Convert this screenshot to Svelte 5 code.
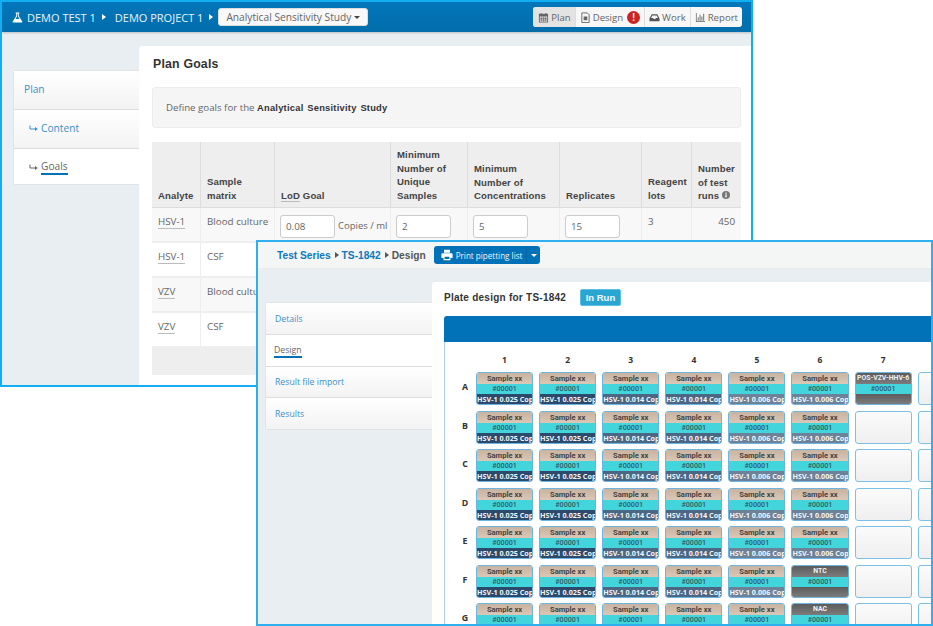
<script>
  const rows1 = [
    ['HSV-1', 'Blood culture', true],
    ['HSV-1', 'CSF', false],
    ['VZV', 'Blood culture', true],
    ['VZV', 'CSF', false]
  ];
  const sideTabs = ['Details', 'Design', 'Result file import', 'Results'];
  const colLabels = [1, 2, 3, 4, 5, 6, 7, 8];
  const rowLabels = ['A', 'B', 'C', 'D', 'E', 'F', 'G'];
  const conc = ['HSV-1 0.025 Cop', 'HSV-1 0.025 Cop', 'HSV-1 0.014 Cop', 'HSV-1 0.014 Cop', 'HSV-1 0.006 Cop', 'HSV-1 0.006 Cop'];
  const tone = ['d1', 'd1', 'd2', 'd2', 'd3', 'd3'];

  function well(r, c) {
    if (c === 7) return { kind: 'empty' };
    if (c === 6) return r === 0 ? { kind: 'ctl', top: 'POS-VZV-HHV-6' } : { kind: 'empty' };
    if (c === 5 && r === 5) return { kind: 'ctl', top: 'NTC' };
    if (c === 5 && r === 6) return { kind: 'ctl', top: 'NAC' };
    return { kind: 'sample', bottom: conc[c], tone: tone[c] };
  }
</script>

{#snippet ret()}
  <svg class="ret" viewBox="0 0 9 7" width="9" height="7"><path fill="none" stroke="currentColor" stroke-width="1" d="M1 .5v3.500h6.500"/><path fill="currentColor" d="M6 2l2.800 2L6 6z"/></svg>
{/snippet}

<div class="canvas">
  <section class="win win1">
    <header class="topbar">
      <div class="crumbs">
        <svg class="flask" viewBox="0 0 12 12" width="11" height="11"><path fill="#fff" d="M4 .5h4v1h-.6v2.800l3.700 5.800c.5.800 0 1.400-.8 1.400H1.700c-.8 0-1.300-.6-.8-1.400l3.700-5.800V1.500H4zM3.700 7.500h4.600L6.400 4.600V1.500H5.600v3.100z"/></svg>
        <span>DEMO TEST 1</span><i class="caret-r white"></i>
        <span class="second">DEMO PROJECT 1</span><i class="caret-r white"></i>
        <button class="study">Analytical Sensitivity Study<i class="caret-d"></i></button>
      </div>
      <div class="tabs">
        <div class="tab on">
          <svg viewBox="0 0 12 12" width="11" height="11"><path fill="#666" d="M1 2h2V1h1v1h4V1h1v1h2v9.500H1zm1 3v5.500h8V5z"/><path stroke="#666" stroke-width=".7" d="M4 5v5.500M6 5v5.500M8 5v5.500M2 7h8M2 8.800h8"/></svg>Plan</div>
        <div class="tab">
          <svg viewBox="0 0 12 12" width="11" height="11"><path fill="none" stroke="#666" d="M2 1h6l2 2v8.500H2z"/><path fill="#666" d="M4 5h4v4H4z"/></svg>Design<span class="alert">!</span></div>
        <div class="tab">
          <svg viewBox="0 0 12 12" width="11" height="11"><path fill="#555" d="M3 2.500h6l2.500 4.500v3H.5V7zM3.700 3.700 2.200 6.500h2.300l.6 1h1.800l.6-1h2.300L8.300 3.700z"/></svg>Work</div>
        <div class="tab">
          <svg viewBox="0 0 12 12" width="11" height="11"><path fill="#666" d="M1 1h.8v9.200H11v.8H1zM3 6h1v3.500H3zM5 3h1v6.500H5zM7 5h1v4.500H7zM9 2h1v7.500H9z"/></svg>Report</div>
      </div>
    </header>
    <div class="body1">
      <nav class="side1">
        <a class="s1 link">Plan</a>
        <a class="s1 link sub">{@render ret()}Content</a>
        <a class="s1 active sub">{@render ret()}<span class="uline">Goals</span></a>
      </nav>
      <main class="panel1">
        <h2>Plan Goals</h2>
        <div class="well-note">Define goals for the <b>Analytical Sensitivity Study</b></div>
        <div class="tbl">
          <div class="th">Analyte</div>
          <div class="th">Sample<br />matrix</div>
          <div class="th"><span class="dash-h">LoD</span> Goal</div>
          <div class="th">Minimum<br />Number of<br />Unique<br />Samples</div>
          <div class="th">Minimum<br />Number of<br />Concentrations</div>
          <div class="th">Replicates</div>
          <div class="th">Reagent<br />lots</div>
          <div class="th">Number<br />of test<br />runs <svg viewBox="0 0 10 10" width="8" height="8"><circle cx="5" cy="5" r="5" fill="#777"/><rect x="4.200" y="4.200" width="1.600" height="3.800" fill="#fff"/><rect x="4.200" y="2" width="1.600" height="1.500" fill="#fff"/></svg></div>
          {#each rows1 as r, i}
            <div class="td" class:alt={r[2]}><span class="dash">{r[0]}</span></div>
            <div class="td" class:alt={r[2]}>{r[1]}</div>
            <div class="td ctl" class:alt={r[2]}>{#if i === 0}<span class="inp">0.08</span><span class="unit">Copies / ml</span>{/if}</div>
            <div class="td ctl" class:alt={r[2]}>{#if i === 0}<span class="inp">2</span>{/if}</div>
            <div class="td ctl" class:alt={r[2]}>{#if i === 0}<span class="inp">5</span>{/if}</div>
            <div class="td ctl" class:alt={r[2]}>{#if i === 0}<span class="inp">15</span>{/if}</div>
            <div class="td" class:alt={r[2]}>{i === 0 ? '3' : ''}</div>
            <div class="td num" class:alt={r[2]}>{i === 0 ? '450' : ''}</div>
          {/each}
          <div class="tfoot"></div>
        </div>
      </main>
    </div>
  </section>

  <section class="win win2">
    <header class="bar2">
      <a class="bc">Test Series</a><i class="caret-r dark"></i><a class="bc">TS-1842</a><i class="caret-r dark"></i><span class="bc cur">Design</span>
      <div class="print">
        <span class="print-main">
          <svg viewBox="0 0 14 14" width="12" height="12"><path fill="#fff" d="M3.500 1h7v3.500h-7zM1.500 5h11c.6 0 1 .4 1 1v4.500h-2.500V13H3v-2.500H.5V6c0-.6.4-1 1-1zM4.200 9v2.800h5.600V9z"/></svg>
          Print pipetting list</span><span class="print-drop"><i class="caret-d cw"></i></span>
      </div>
    </header>
    <div class="body2">
      <nav class="side2">
        {#each sideTabs as t, i}
          <a class="s2" class:active={i === 1}>{#if i === 1}<span class="uline u2">{t}</span>{:else}{t}{/if}</a>
        {/each}
      </nav>
      <main class="panel2">
        <div class="title2"><h3>Plate design for TS-1842</h3><span class="badge">In Run</span></div>
        <div class="plate-head"></div>
        <div class="plate">
          <div class="corner"></div>
          {#each colLabels as c}<div class="cl">{c === 8 ? '' : c}</div>{/each}
          {#each rowLabels as rl, r}
            <div class="rl">{rl}</div>
            {#each colLabels as c, ci}
              {@const w = well(r, ci)}
              {#if w.kind === 'empty'}
                <div class="w empty"></div>
              {:else if w.kind === 'ctl'}
                <div class="w">
                  <div class="t grey">{w.top}</div>
                  <div class="m">#00001</div>
                  <div class="b grey"></div>
                </div>
              {:else}
                <div class="w">
                  <div class="t">Sample xx</div>
                  <div class="m">#00001</div>
                  <div class="b {w.tone}">{w.bottom}</div>
                </div>
              {/if}
            {/each}
          {/each}
        </div>
      </main>
    </div>
  </section>
</div>

<style>
  :global(body) { margin: 0; background: #fff; }
  .canvas { position: relative; width: 933px; height: 626px; overflow: hidden; font-family: "Open Sans", sans-serif; color: #555; }
  .win { position: absolute; box-sizing: border-box; overflow: hidden; display: flex; flex-direction: column; background: #e8eef1; }
  .win1 { left: 0; top: 0; width: 753px; height: 387px; border: 2px solid #12aef2; }
  .win2 { left: 256px; top: 240px; width: 677px; height: 386px; border: 2px solid #2fb0ee; }

  .topbar { flex: none; height: 30px; box-sizing: border-box; background: linear-gradient(#0277bb, #026dab); display: flex; align-items: center; justify-content: space-between; padding: 0 9px 0 10px; box-shadow: 0 1px 2px rgba(0,0,0,.2); position: relative; }
  .crumbs { display: flex; align-items: center; color: #e8f4fb; font-size: 11px; }
  .flask { margin-right: 4px; }
  .second { margin-left: 9px; }
  .caret-r { display: inline-block; width: 0; height: 0; border-top: 3.500px solid transparent; border-bottom: 3.500px solid transparent; border-left: 4px solid #fff; margin-left: 6px; }
  .caret-r.dark { border-left-color: #555; margin: 0 3px 0 4px; }
  .study { margin-left: 5px; height: 18px; border: 1px solid #ddd; border-radius: 3px; background: #f8f8f8; padding: 0 7px; font: 10.200px "Open Sans", sans-serif; color: #666; display: flex; align-items: center; }
  .caret-d { display: inline-block; width: 0; height: 0; border-left: 3px solid transparent; border-right: 3px solid transparent; border-top: 3px solid #444; margin-left: 3px; }
  .caret-d.cw { border-top-color: #fff; margin: 0; }
  .tabs { display: flex; height: 20px; border-radius: 3px; overflow: hidden; background: #f7f7f7; font-size: 9.600px; color: #666; }
  .tab { display: flex; align-items: center; gap: 2px; padding: 0 4px; border-left: 1px solid #ddd; }
  .tab:first-child { border-left: 0; padding-left: 5px; }
  .tab.on { background: #e3e3e3; }
  .alert { width: 13px; height: 13px; border-radius: 50%; background: #cc2222; color: #fff; font: bold 10px/13px "Liberation Sans", sans-serif; text-align: center; margin-left: 2px; }

  .body1 { flex: 1; display: flex; min-height: 0; padding: 14px 0 0 11px; }
  .side1 { flex: none; width: 126px; margin-top: 24px; align-self: flex-start; border: 1px solid #e1e4e6; border-right: 0; border-radius: 3px 0 0 3px; box-sizing: border-box; background: #fff; }
  .s1 { display: flex; align-items: center; height: 39px; box-sizing: border-box; padding: 0 0 2px 10px; font-size: 10.200px; background: linear-gradient(#fff, #f3f3f3); border-bottom: 1px solid #ddd; }
  .s1:last-child { border-bottom: 0; height: 35px; }
  .s1.sub { padding-left: 15px; }
  .link { color: #3b8fc9; }
  .ret { margin-right: 3px; flex: none; }
  .s1.active { background: #fff; color: #666; padding-top: 1px; padding-bottom: 0; }
  .uline { border-bottom: 2px solid #0272b8; line-height: 13px; display: inline-block; }
  .uline.u2 { line-height: 12px; }

  .panel1 { flex: 1; background: #fff; padding: 0 10px 0 13px; border-radius: 3px 0 0 0; min-width: 0; overflow: hidden; }
  h2 { margin: 10px 0 0; padding-left: 1px; font: bold 12.300px/17px "Liberation Sans", sans-serif; color: #333; letter-spacing: .2px; }
  .well-note { margin-top: 14px; height: 41px; box-sizing: border-box; display: flex; align-items: center; padding-left: 13px; background: #f5f5f5; border: 1px solid #ececec; border-radius: 3px; font-size: 9.700px; color: #666; white-space: pre; }
  .well-note b { font: bold 9.300px "Liberation Sans", sans-serif; color: #333; letter-spacing: .25px; word-spacing: 1px; }
  .tbl { margin-top: 14px; display: grid; grid-template-columns: 49px 74px 116px 77px 92px 82px 50px 49px; grid-template-rows: 66px repeat(4, 35px) 27px; }
  .th { display: block; background: #eee; border-right: 1px solid #ddd; border-bottom: 1px solid #ddd; box-sizing: border-box; padding: 0 6px 5px; font: bold 9.600px/13.700px "Liberation Sans", sans-serif; color: #444; letter-spacing: .12px; white-space: nowrap; }
  .th:nth-child(1), .th:nth-child(3), .th:nth-child(6) { padding-top: 47px; }
  .th:nth-child(2), .th:nth-child(7) { padding-top: 33px; }
  .th:nth-child(4) { padding-top: 6px; }
  .th:nth-child(5) { padding-top: 20px; }
  .th:nth-child(8) { padding-top: 20px; border-right: 0; }
  .dash-h { border-bottom: 1px solid #bbb; }
  .td { background: #fff; border-right: 1px solid #eee; border-bottom: 2px solid #eee; box-sizing: border-box; padding: 7px 6px 0; font-size: 9.800px; line-height: 14px; color: #666; white-space: nowrap; overflow: hidden; }
  .td.alt { background: #f8f8f8; }
  .td:nth-child(8n + 8) { border-right: 0; }
  .td.ctl { padding: 7px 5px 0; display: flex; align-items: flex-start; }
  .num { text-align: right; }
  .dash { border-bottom: 1px solid #bbb; display: inline-block; line-height: 13px; }
  .inp { display: block; flex: none; box-sizing: border-box; width: 55px; height: 23px; border: 1px solid #ccc; border-radius: 3px; background: #fff; padding: 4px 5px; font-size: 9.800px; line-height: 14px; color: #666; }
  .unit { margin: 4px 0 0 3px; font-size: 9.500px; }
  .tfoot { grid-column: 1 / -1; background: #eee; }

  .bar2 { flex: none; height: 27px; box-sizing: border-box; background: #f4f5f5; border-bottom: 1px solid #eaecec; display: flex; align-items: center; padding-left: 19px; font: bold 10.200px "Liberation Sans", sans-serif; }
  .bc { color: #0e78bd; }
  .bc.cur { color: #555; }
  .print { margin-left: 8px; height: 18px; display: flex; background: #0272b8; border-radius: 3px; color: #e8f4fb; font: 8.100px "Open Sans", sans-serif; }
  .print-main { display: flex; align-items: center; gap: 3px; padding: 0 4px 0 7px; border-right: 1px solid #0a66a0; }
  .print-drop { display: flex; align-items: center; padding: 0 3.500px; }

  .body2 { flex: 1; display: flex; min-height: 0; padding: 13px 0 0 7px; }
  .side2 { flex: none; width: 167px; margin-top: 20px; align-self: flex-start; border: 1px solid #e1e4e6; border-right: 0; border-radius: 3px 0 0 3px; box-sizing: border-box; background: #fff; }
  .s2 { display: flex; align-items: center; height: 32px; box-sizing: border-box; padding-left: 9px; font-size: 8.700px; color: #3b8fc9; background: linear-gradient(#fff, #f3f3f3); border-bottom: 1px solid #ddd; }
  .s2:nth-child(n + 3) { height: 31px; }
  .s2:last-child { border-bottom: 0; }
  .s2.active { background: #fff; color: #666; padding-left: 8px; padding-top: 1px; }
  .panel2 { flex: 1; min-width: 0; background: #fff; padding: 0 0 0 12px; border-radius: 3px 0 0 0; overflow: hidden; }
  .title2 { height: 34px; display: flex; align-items: center; gap: 14px; padding-bottom: 4px; box-sizing: border-box; }
  h3 { margin: 0; font: bold 10px "Liberation Sans", sans-serif; color: #333; letter-spacing: .25px; }
  .badge { box-sizing: border-box; background: #2ba6d3; border: 1px solid #5cc0e4; color: #f2fbff; font: bold 9.500px/15px "Liberation Sans", sans-serif; padding: 0 4.500px; border-radius: 2px; height: 17px; }
  .plate-head { height: 26px; background: #0272b8; border-radius: 3px 0 0 0; }
  .plate { border-left: 1px solid #a8d4ec; display: grid; grid-template-columns: 25px repeat(8, 57.100px); column-gap: 6px; grid-template-rows: 15px repeat(7, 33px); row-gap: 5.500px; padding-top: 9.500px; }
  .cl { font: bold 8.500px/15px "Open Sans", sans-serif; color: #333; text-align: center; }
  .rl { font: bold 8.800px/31px "Open Sans", sans-serif; color: #333; text-align: center; padding-left: 15px; }
  .w { box-sizing: border-box; border: 1px solid #6db4de; border-radius: 3px; overflow: hidden; display: flex; flex-direction: column; text-align: center; font: bold 7.200px/10px "Open Sans", sans-serif; white-space: nowrap; background: #f6f6f6; }
  .w.empty { background: linear-gradient(#fbfbfb, #efefef); border-color: #7cc0e6; }
  .t { flex: none; height: 11px; line-height: 11px; background: linear-gradient(#c9b3a0, #dac7b6); color: #444; font: bold 7.600px/11px Roboto, sans-serif; }
  .m { flex: none; height: 10px; background: #43d5dc; color: #2f5c64; font: 500 7.200px/10px Roboto, sans-serif; }
  .b { flex: 1; line-height: 10px; color: #f4f6f8; overflow: hidden; margin: 0; }
  .d1 { background: #2c4a6c; }
  .d2 { background: #4b6784; }
  .d3 { background: #6d8299; }
  .grey { background: linear-gradient(#5c5c5c, #7c7c7c); color: #f2f2f2; }
  .t.grey { font-size: 6.900px; }
</style>
